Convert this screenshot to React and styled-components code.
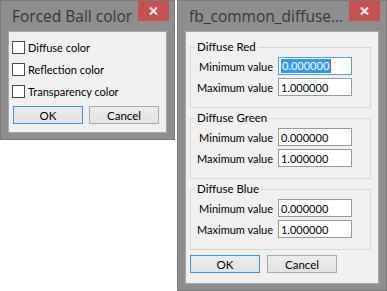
import React from "react";
import styled, { createGlobalStyle } from "styled-components";

const GlobalStyle = createGlobalStyle`
  html, body { margin: 0; padding: 0; background: #ffffff; }
  body { font-family: Lato, "Noto Sans", sans-serif; }
  * { box-sizing: border-box; }
`;

const UI_FONT = `Lato, "Noto Sans", sans-serif`;
const TITLE_FONT = `"Open Sans", "Noto Sans", sans-serif`;

const Desktop = styled.div`
  display: flex;
  align-items: flex-start;
  gap: 2px;
  width: 387px;
  height: 291px;
  overflow: hidden;
`;

const Window = styled.div`
  display: flex;
  flex-direction: column;
  flex-shrink: 0;
  width: ${(p) => p.$w}px;
  height: ${(p) => p.$h}px;
  background: #8e8e8e;
  border: 1px solid #7a7a7a;
`;

const TitleBar = styled.div`
  display: flex;
  align-items: flex-start;
  height: 30px;
  flex-shrink: 0;
`;

const Title = styled.div`
  flex: 1;
  min-width: 0;
  padding: 4px 0 0 11px;
  font-family: ${TITLE_FONT};
  font-size: 15.5px;
  line-height: 22px;
  color: #383838;
  white-space: nowrap;
  overflow: hidden;
`;

const CloseButton = styled.div`
  flex-shrink: 0;
  width: 31px;
  height: 20px;
  margin-right: ${(p) => p.$mr}px;
  background: #c75050;
  display: flex;
  align-items: center;
  justify-content: center;
`;

const Client = styled.div`
  flex: 1;
  margin: 0 7px 6px;
  background: #f0f0f0;
  border: 1px solid #a8a8a8;
  display: flex;
  flex-direction: column;
  padding: ${(p) => p.$pad};
`;

const CheckList = styled.div`
  display: flex;
  flex-direction: column;
  gap: 9px;
`;

const CheckRow = styled.label`
  display: flex;
  align-items: center;
  gap: 3px;
  height: 13px;
  font-family: ${UI_FONT};
  font-size: 11px;
  color: #000;
`;

const CheckBox = styled.span`
  width: 13px;
  height: 13px;
  flex-shrink: 0;
  background: #fff;
  border: 1px solid #4a4a4a;
`;

const ButtonRow = styled.div`
  display: flex;
  gap: ${(p) => p.$gap}px;
  margin-top: ${(p) => p.$mt}px;
  margin-left: ${(p) => p.$ml}px;
`;

const Button = styled.div`
  width: 70px;
  height: 18px;
  display: flex;
  align-items: center;
  justify-content: center;
  font-family: ${UI_FONT};
  font-size: 11.5px;
  color: #000;
  background: linear-gradient(#ececec, #e3e3e3);
  border: 1px solid ${(p) => (p.$default ? "#3c94e8" : "#acacac")};
`;

const Group = styled.fieldset`
  margin: ${(p) => p.$mt}px 0 0 0;
  width: 181px;
  padding: 3px 0 11px 0;
  border: 1px solid #d6d6d6;
  min-width: 0;
`;

const Legend = styled.legend`
  margin-left: 4px;
  padding: 0 2px;
  font-family: ${UI_FONT};
  font-size: 11.5px;
  line-height: 14px;
  color: #000;
`;

const FieldGrid = styled.div`
  display: grid;
  grid-template-columns: 82px 74px;
  column-gap: 5px;
  row-gap: 3px;
  align-items: center;
`;

const FieldLabel = styled.div`
  text-align: right;
  font-family: ${UI_FONT};
  font-size: 11px;
  color: #000;
  white-space: nowrap;
`;

const TextBox = styled.div`
  height: 18px;
  background: #fff;
  border: 1px solid ${(p) => (p.$focused ? "#569de5" : "#9a9a9a")};
  display: flex;
  align-items: center;
  padding-left: 2px;
  font-family: ${UI_FONT};
  font-size: 11px;
  color: #000;
`;

const Selection = styled.span`
  background: #3399ff;
  color: #fff;
  line-height: 14px;
  padding: 0 1px;
  border-right: 1px solid #c05a10;
`;

const CloseIcon = () => (
  <svg width="9" height="8" viewBox="0 0 9 8">
    <path d="M1 0.5 L8 7.5 M8 0.5 L1 7.5" stroke="#fff" strokeWidth="2" fill="none" />
  </svg>
);

const RangeGroup = ({ title, mt, focused }) => (
  <Group $mt={mt}>
    <Legend>{title}</Legend>
    <FieldGrid>
      <FieldLabel>Minimum value</FieldLabel>
      <TextBox $focused={focused}>
        {focused ? <Selection>0.000000</Selection> : "0.000000"}
      </TextBox>
      <FieldLabel>Maximum value</FieldLabel>
      <TextBox>1.000000</TextBox>
    </FieldGrid>
  </Group>
);

export default function App() {
  return (
    <>
      <GlobalStyle />
      <Desktop>
        <Window $w={175} $h={140}>
          <TitleBar>
            <Title>Forced Ball color</Title>
            <CloseButton $mr={5}>
              <CloseIcon />
            </CloseButton>
          </TitleBar>
          <Client $pad="9px 0 0 3px">
            <CheckList>
              <CheckRow>
                <CheckBox />
                Diffuse color
              </CheckRow>
              <CheckRow>
                <CheckBox />
                Reflection color
              </CheckRow>
              <CheckRow>
                <CheckBox />
                Transparency color
              </CheckRow>
            </CheckList>
            <ButtonRow $gap={6} $mt={8} $ml={1}>
              <Button $default>OK</Button>
              <Button>Cancel</Button>
            </ButtonRow>
          </Client>
        </Window>
        <Window $w={210} $h={291}>
          <TitleBar>
            <Title>fb_common_diffuse...</Title>
            <CloseButton $mr={6}>
              <CloseIcon />
            </CloseButton>
          </TitleBar>
          <Client $pad="8px 0 0 4px">
            <RangeGroup title="Diffuse Red" mt={0} focused />
            <RangeGroup title="Diffuse Green" mt={3} />
            <RangeGroup title="Diffuse Blue" mt={3} />
            <ButtonRow $gap={7} $mt={5} $ml={0}>
              <Button $default>OK</Button>
              <Button>Cancel</Button>
            </ButtonRow>
          </Client>
        </Window>
      </Desktop>
    </>
  );
}
